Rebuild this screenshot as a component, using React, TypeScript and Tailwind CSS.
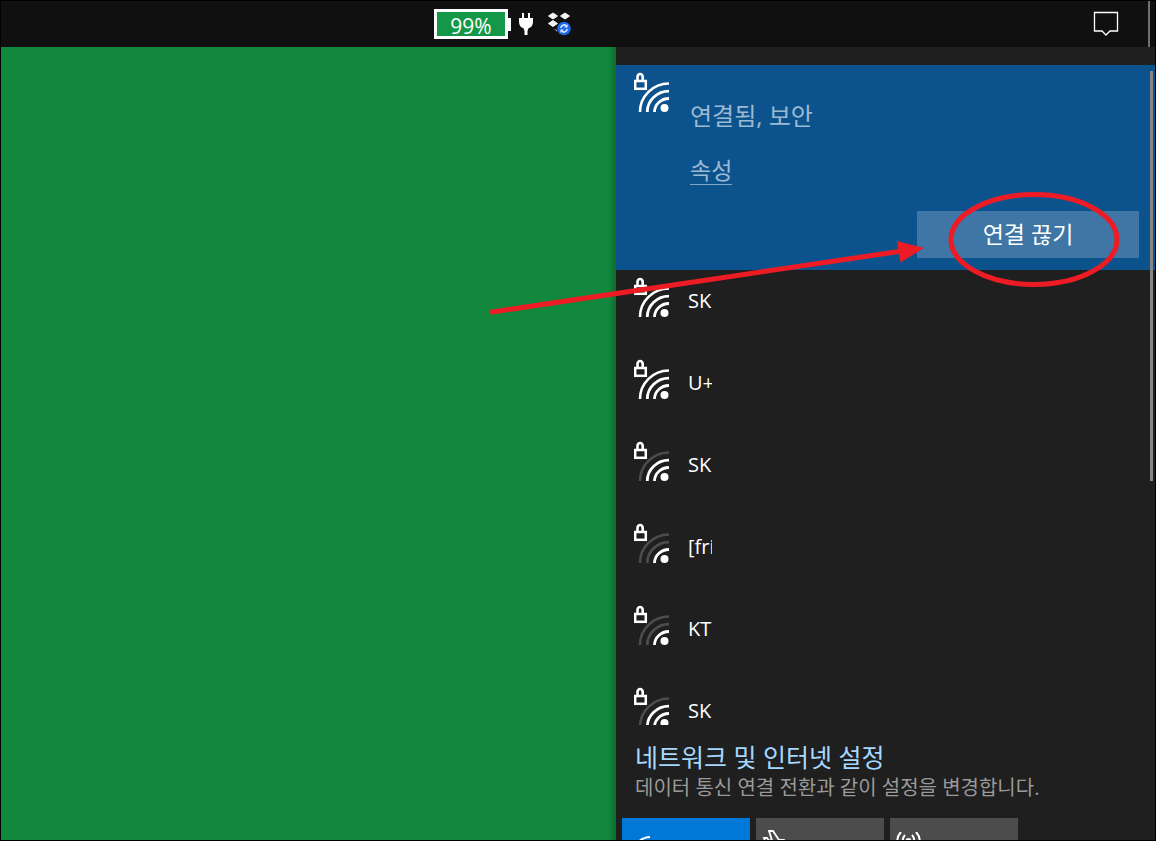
import { useState } from "react";

type Network = { id: number; name: string; bars: number };

const networks: Network[] = [
  { id: 1, name: "SK", bars: 3 },
  { id: 2, name: "U+", bars: 3 },
  { id: 3, name: "SK", bars: 2 },
  { id: 4, name: "[fri", bars: 1 },
  { id: 5, name: "KT", bars: 1 },
  { id: 6, name: "SK", bars: 2 },
];

function SecureWifiIcon({ bars }: { bars: number }) {
  const on = "#ffffff";
  const off = "#4c4c4c";
  return (
    <svg width="36" height="40" viewBox="0 0 36 40" fill="none" className="shrink-0" aria-hidden="true">
      <path d="M6 40A29 28.500 0 0 1 35 11.500" stroke={bars > 2 ? on : off} strokeWidth="2.600" />
      <path d="M13.300 40A21.700 20.800 0 0 1 35 19.200" stroke={bars > 1 ? on : off} strokeWidth="2.800" />
      <path d="M20.500 40A14.500 13.500 0 0 1 35 26.500" stroke={on} strokeWidth="2.800" />
      <circle cx="30.500" cy="36" r="4" fill={on} />
      <path d="M3.500 8V5a2.600 3 0 0 1 5.200 0v3" stroke={on} strokeWidth="2.600" />
      <rect x="1.200" y="9" width="10.600" height="7.800" stroke={on} strokeWidth="2.500" />
    </svg>
  );
}

function PlugIcon() {
  return (
    <svg width="14" height="22" viewBox="0 0 14 22" fill="#fff" aria-hidden="true">
      <path d="M3 0h2v5h4V0h2v5h3v4c0 3.500-2 5.500-4.500 6.300L8.500 18v4h-3v-4l-1-2.700C2 14.500 0 12.500 0 9V5h3z" />
    </svg>
  );
}

function DropboxIcon() {
  return (
    <svg width="26" height="24" viewBox="0 0 26 24" aria-hidden="true">
      <g fill="#f4f4f4" stroke="#f4f4f4" strokeWidth="1" strokeLinejoin="round">
        <path d="M6 1l4.500 3L6 7 1.500 4zM18 1l4.500 3L18 7l-4.500-3zM6 8.500l4.500 3-4.500 3-4.500-3z" />
      </g>
      <path d="M7 16.500l3 1.500v2z" fill="#999" />
      <circle cx="17" cy="16.500" r="6.800" fill="#1c69e8" />
      <path
        d="M13.800 16a3.300 3.300 0 0 1 5.500-2.200M20.200 17a3.300 3.300 0 0 1-5.500 2.200"
        stroke="#d8e8ff"
        strokeWidth="1.600"
        fill="none"
      />
      <path d="M20.600 12v3.600h-3.600zM13.400 21v-3.600H17z" fill="#d8e8ff" />
    </svg>
  );
}

function Taskbar() {
  return (
    <header className="flex h-[46px] shrink-0 items-center bg-[#101010]">
      <div className="flex items-center pl-[433px]">
        <div className="flex h-[30px] w-[74px] items-center justify-center border-[3px] border-white bg-[#149847] pt-1 text-[21px] leading-none text-white">
          99%
        </div>
        <div className="h-[13px] w-[3px] bg-white" />
        <div className="ml-2 flex items-center gap-3.5">
          <PlugIcon />
          <DropboxIcon />
        </div>
      </div>
      <button type="button" aria-label="알림 센터" className="mr-[29px] ml-auto">
        <svg width="26" height="26" viewBox="0 0 26 26" fill="none" stroke="#fff" strokeWidth="1.300" aria-hidden="true">
          <path d="M1.500 1.500h23v18.500h-7.500l-4 4-4-4H1.500z" />
        </svg>
      </button>
      <div className="mr-[5px] h-full w-0.5 bg-[#707070]" />
    </header>
  );
}

function ConnectedCard({ onDisconnect }: { onDisconnect: () => void }) {
  return (
    <section className="flex h-[205px] shrink-0 bg-[#0c538d] pt-[7px] pr-4 pb-3 pl-[18px]">
      <SecureWifiIcon bars={3} />
      <div className="flex flex-1 flex-col pl-5 text-[#9dbad2]">
        <p className="pt-7 text-2xl leading-8">연결됨, 보안</p>
        <a href="#properties" className="mt-6 self-start border-b border-[#7fa6c6] text-[23px] leading-7">
          속성
        </a>
        <button
          type="button"
          onClick={onDisconnect}
          className="mt-auto h-[47px] w-[222px] self-end bg-[#3f76a5] text-[23px] text-white"
        >
          연결 끊기
        </button>
      </div>
    </section>
  );
}

function NetworkRow({ network }: { network: Network }) {
  return (
    <li className="h-[82px] shrink-0">
      <button type="button" className="flex h-full w-full items-start pt-[7px] pl-[18px] text-left">
        <SecureWifiIcon bars={network.bars} />
        <span className="mt-2.5 ml-[18px] w-6 overflow-hidden text-xl leading-7 whitespace-nowrap text-white">
          {network.name}
        </span>
      </button>
    </li>
  );
}

function QuickTiles() {
  const tile = "flex h-24 w-32 shrink-0 items-start text-white";
  return (
    <div className="flex gap-1.5 pl-1.5">
      <button type="button" aria-label="Wi-Fi" className={`${tile} bg-[#0078d7] pt-4 pl-2.5`}>
        <svg width="24" height="24" viewBox="0 0 24 24" fill="none" stroke="currentColor" strokeWidth="2" aria-hidden="true">
          <path d="M1 20A18 17 0 0 1 18 3M7 21A12 12 0 0 1 18 9" />
        </svg>
      </button>
      <button type="button" aria-label="비행기 모드" className={`${tile} bg-[#4c4c4c] pt-3 pl-1.5`}>
        <svg width="26" height="24" viewBox="0 0 26 24" fill="none" stroke="currentColor" strokeWidth="1.800" aria-hidden="true">
          <path d="M2 8h3l2 2.500h3L7 1h4l6 9h5l2 2-2 2h-5l-6 9H7l3-9H7L5 17H2l1.500-4.500z" />
        </svg>
      </button>
      <button type="button" aria-label="모바일 핫스팟" className={`${tile} bg-[#4c4c4c] pt-3.5 pl-1.5`}>
        <svg width="26" height="24" viewBox="0 0 26 24" fill="none" stroke="currentColor" strokeWidth="2" aria-hidden="true">
          <path d="M5 0C0 5 0 13 5 18M9 3C6 6 6 12 9 15M16 3C19 6 19 12 16 15M20 0C25 5 25 13 20 18" />
          <circle cx="12.500" cy="9" r="2" />
          <path d="M12.500 11v12" />
        </svg>
      </button>
    </div>
  );
}

function Annotation() {
  return (
    <svg
      className="pointer-events-none absolute top-0 right-0"
      width="679"
      height="340"
      viewBox="476 1 679 340"
      fill="none"
      stroke="#ed1c24"
      strokeWidth="5"
      aria-hidden="true"
    >
      <ellipse cx="1034" cy="239.500" rx="83" ry="45" />
      <path d="M492 312L902 251" strokeLinecap="round" />
      <path d="M924 248L897 241L900.500 262.500z" fill="#ed1c24" stroke="none" />
    </svg>
  );
}

export default function App() {
  const [connected, setConnected] = useState(true);
  return (
    <div className="relative flex h-screen flex-col overflow-hidden border border-black bg-[#1f1f1f] font-['Open_Sans','Noto_Sans_CJK_KR',sans-serif]">
      <Taskbar />
      <div className="flex min-h-0 flex-1">
        <main className="flex flex-1 justify-end bg-[#11883d]">
          <div className="w-2 bg-linear-to-r from-transparent to-black/20" />
        </main>
        <aside className="relative flex w-[539px] flex-col bg-[#1f1f1f] pt-[18px]">
          <div className="flex min-h-0 flex-1 flex-col overflow-hidden">
            {connected && <ConnectedCard onDisconnect={() => setConnected(false)} />}
            <ul className="flex flex-col">
              {networks.map((n) => (
                <NetworkRow key={n.id} network={n} />
              ))}
            </ul>
          </div>
          <div className="absolute top-6 right-0.5 h-[410px] w-[3px] bg-[#858585]" />
          <footer className="h-[115px] shrink-0 overflow-hidden pt-4">
            <a href="#settings" className="block pl-[19px] text-[25px] leading-8 text-[#a6d8ff]">
              네트워크 및 인터넷 설정
            </a>
            <p className="mb-4 pt-px pl-[19px] text-xl leading-7 text-[#9a9a9a]">
              데이터 통신 연결 전환과 같이 설정을 변경합니다.
            </p>
            <QuickTiles />
          </footer>
        </aside>
      </div>
      <Annotation />
    </div>
  );
}
